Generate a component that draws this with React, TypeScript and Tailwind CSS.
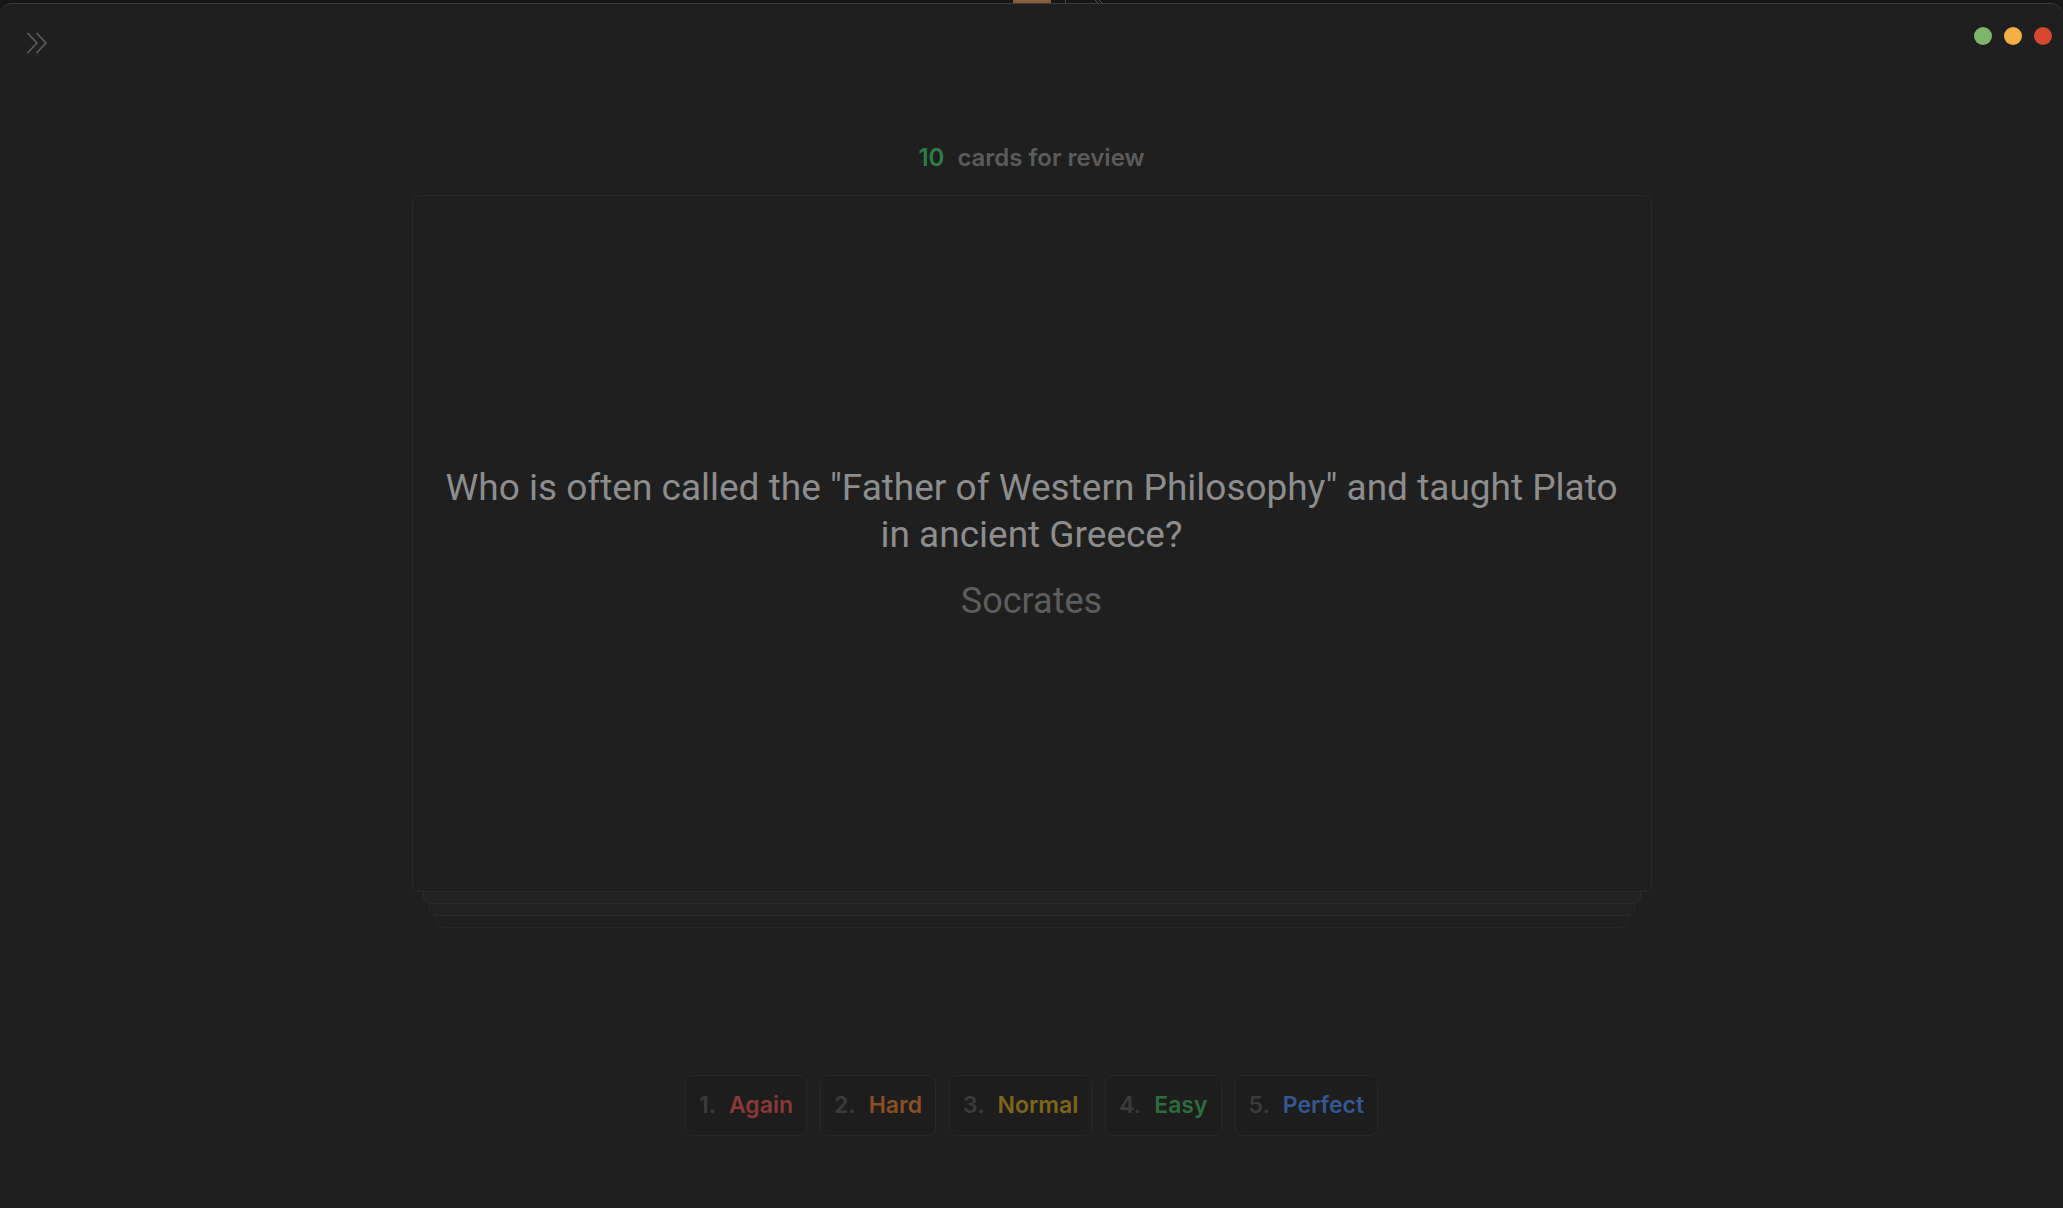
import React from 'react';

const ratings = [
  { key: '1.', label: 'Again', color: 'text-[#8a3939]' },
  { key: '2.', label: 'Hard', color: 'text-[#894f25]' },
  { key: '3.', label: 'Normal', color: 'text-[#7d651b]' },
  { key: '4.', label: 'Easy', color: 'text-[#2e6c40]' },
  { key: '5.', label: 'Perfect', color: 'text-[#355891]' },
];

const ChevronsIcon: React.FC = () => (
  <svg width="22" height="22" viewBox="0 0 22 22" fill="none" stroke="#5b5b5b" strokeWidth="1.8" strokeLinecap="round" strokeLinejoin="round">
    <path d="M2 1.5 L11 11 L2 20.5" />
    <path d="M11 1.5 L20 11 L11 20.5" />
  </svg>
);

export default function App() {
  return (
    <div className="h-screen w-full bg-[#161616] flex flex-col font-['Inter','Noto_Sans',sans-serif]">
      {/* sliver of the window behind */}
      <div className="h-[3px] flex justify-center items-start shrink-0 pl-[54px]">
        <div className="w-[38px] h-[3px] bg-[#8a5b3c]" />
        <svg className="ml-[14px]" width="40" height="3" viewBox="0 0 40 3">
          <line x1="0.5" y1="0" x2="0.5" y2="3" stroke="#4a4a4a" />
          <line x1="30" y1="0" x2="33" y2="3" stroke="#555" />
          <line x1="34" y1="0" x2="37" y2="3" stroke="#555" />
        </svg>
      </div>

      <div className="flex-1 rounded-t-[12px] border-t border-[#3c3c3c] bg-[#1f1f1f] flex flex-col">
        {/* top bar */}
        <div className="h-[60px] flex justify-between items-start pl-[26px] pr-[11px]">
          <div className="mt-[28px]">
            <ChevronsIcon />
          </div>
          <div className="mt-[23px] flex gap-[12px]">
            <span className="w-[18px] h-[18px] rounded-full bg-[#7cb56a]" />
            <span className="w-[18px] h-[18px] rounded-full bg-[#f4ae46]" />
            <span className="w-[18px] h-[18px] rounded-full bg-[#d5482f]" />
          </div>
        </div>

        <main className="flex flex-col items-center">
          <div className="mt-[78px] leading-[32px] text-[24px] font-semibold flex gap-[13px]">
            <span className="text-[#2e7d46]">10</span>
            <span className="text-[#5b5b5b]">cards for review</span>
          </div>

          {/* card stack */}
          <div className="mt-[21px] w-[1240px] flex flex-col">
            <div className="h-[697px] rounded-[8px] border border-[#2b2b2b] bg-[#1f1f1f] flex flex-col items-center justify-center text-center px-[28px] font-['Roboto','Liberation_Sans',sans-serif]">
              <p className="text-[37px] leading-[47px] text-[#8d8d8d]">
                Who is often called the "Father of Western Philosophy" and taught Plato in ancient Greece?
              </p>
              <p className="mt-[21px] text-[36px] leading-[44px] text-[#5d5d5d]">Socrates</p>
            </div>
            <div className="mx-[11px] h-[12px] rounded-b-[8px] border-x border-b border-[#2b2b2b] bg-[#232323]" />
            <div className="mx-[17px] h-[12px] rounded-b-[8px] border-x border-b border-[#292929] bg-[#212121]" />
            <div className="mx-[24px] h-[12px] rounded-b-[8px] border-x border-b border-[#272727] bg-[#202020]" />
          </div>

          {/* rating buttons */}
          <div className="mt-[147px] flex gap-[13px]">
            {ratings.map((r) => (
              <button
                key={r.key}
                className="h-[61px] px-[13px] flex items-center gap-[13px] rounded-[8px] border border-[#282828] bg-[#1d1d1d] text-[23px] font-semibold"
              >
                <span className="text-[#3b3b3b]">{r.key}</span>
                <span className={r.color}>{r.label}</span>
              </button>
            ))}
          </div>
        </main>
      </div>
    </div>
  );
}
